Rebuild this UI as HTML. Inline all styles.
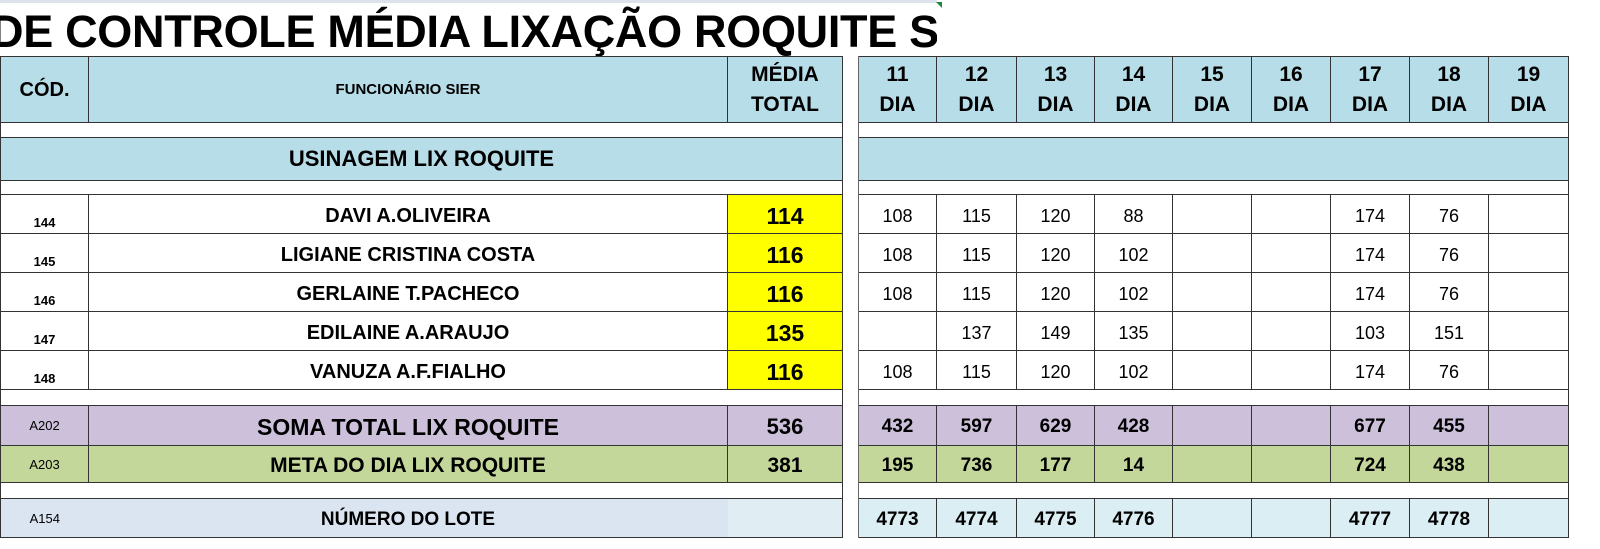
<!DOCTYPE html>
<html><head><meta charset="utf-8">
<style>
body{margin:0;width:1600px;height:549px;background:#fff;overflow:hidden;position:relative;font-family:"Liberation Sans",sans-serif}
.title{position:absolute;left:0;top:0;width:937px;height:56px;overflow:hidden;border-top:3px solid #dde3ea;box-sizing:border-box}
.title span{position:absolute;left:-9px;top:3px;font-weight:bold;font-size:45px;white-space:nowrap;letter-spacing:-0.3px;color:#000}
.tri{position:absolute;left:936px;top:2px;width:0;height:0;border-top:6px solid #1a8a3a;border-left:6px solid transparent}
table{position:absolute;left:0;top:56px;border-collapse:collapse;table-layout:fixed;width:1568px}
td{border:1px solid #333;padding:0;text-align:center;overflow:hidden;white-space:nowrap}
.h td{background:#b7dde8;font-weight:bold;font-size:21px;line-height:30px}
.b td{background:#fff}
.gap{background:#fff!important;border-top:none!important;border-bottom:none!important;border-left:1px solid #666;border-right:1px solid #666}
.nm{font-weight:bold;font-size:20px;padding-top:4px}
.cod{font-weight:bold;font-size:13px;vertical-align:bottom;padding-bottom:3px}
.y{background:#ffff00;font-weight:bold;font-size:23px;padding-top:4px}
.d td.n{font-size:18px;padding-top:4px}
.p td{background:#ccc0da}
.g td{background:#c4d79b}
.l td{background:#daeef3}
.sm{font-size:13px}
.bn{font-weight:bold;font-size:19px;padding-top:3px}
</style></head><body>
<div class="title"><span>DE CONTROLE MÉDIA LIXAÇÃO ROQUITE SIER</span></div>
<div class="tri"></div>
<table>
<colgroup><col style="width:88px"><col style="width:639px"><col style="width:115px"><col style="width:16px"><col style="width:78px"><col style="width:80px"><col style="width:78px"><col style="width:78px"><col style="width:79px"><col style="width:79px"><col style="width:79px"><col style="width:79px"><col style="width:80px"></colgroup>
<tr class="h" style="height:66px"><td style="font-size:20px;width:88px">CÓD.</td><td style="font-size:15px;width:639px">FUNCIONÁRIO SIER</td><td style="width:115px">MÉDIA<br>TOTAL</td><td class="gap" style="width:16px"></td><td style="width:78px">11<br>DIA</td><td style="width:80px">12<br>DIA</td><td style="width:78px">13<br>DIA</td><td style="width:78px">14<br>DIA</td><td style="width:79px">15<br>DIA</td><td style="width:79px">16<br>DIA</td><td style="width:79px">17<br>DIA</td><td style="width:79px">18<br>DIA</td><td style="width:80px">19<br>DIA</td></tr>
<tr class="b" style="height:15px"><td colspan="3"></td><td class="gap"></td><td colspan="9"></td></tr>
<tr style="height:43px"><td colspan="3" style="background:#b7dde8;font-weight:bold;font-size:22px">USINAGEM LIX ROQUITE</td><td class="gap"></td><td colspan="9" style="background:#b7dde8"></td></tr>
<tr class="b" style="height:14px"><td colspan="3"></td><td class="gap"></td><td colspan="9"></td></tr>
<tr class="d" style="height:39px"><td class="cod">144</td><td class="nm">DAVI A.OLIVEIRA</td><td class="y">114</td><td class="gap"></td><td class="n">108</td><td class="n">115</td><td class="n">120</td><td class="n">88</td><td></td><td></td><td class="n">174</td><td class="n">76</td><td></td></tr>
<tr class="d" style="height:39px"><td class="cod">145</td><td class="nm">LIGIANE CRISTINA COSTA</td><td class="y">116</td><td class="gap"></td><td class="n">108</td><td class="n">115</td><td class="n">120</td><td class="n">102</td><td></td><td></td><td class="n">174</td><td class="n">76</td><td></td></tr>
<tr class="d" style="height:39px"><td class="cod">146</td><td class="nm">GERLAINE T.PACHECO</td><td class="y">116</td><td class="gap"></td><td class="n">108</td><td class="n">115</td><td class="n">120</td><td class="n">102</td><td></td><td></td><td class="n">174</td><td class="n">76</td><td></td></tr>
<tr class="d" style="height:39px"><td class="cod">147</td><td class="nm">EDILAINE A.ARAUJO</td><td class="y">135</td><td class="gap"></td><td></td><td class="n">137</td><td class="n">149</td><td class="n">135</td><td></td><td></td><td class="n">103</td><td class="n">151</td><td></td></tr>
<tr class="d" style="height:39px"><td class="cod">148</td><td class="nm">VANUZA A.F.FIALHO</td><td class="y">116</td><td class="gap"></td><td class="n">108</td><td class="n">115</td><td class="n">120</td><td class="n">102</td><td></td><td></td><td class="n">174</td><td class="n">76</td><td></td></tr>
<tr class="b" style="height:16px"><td colspan="3"></td><td class="gap"></td><td colspan="9"></td></tr>
<tr class="p" style="height:40px"><td class="sm">A202</td><td class="nm" style="font-size:23px">SOMA TOTAL LIX ROQUITE</td><td class="bn" style="font-size:22px">536</td><td class="gap"></td><td class="bn">432</td><td class="bn">597</td><td class="bn">629</td><td class="bn">428</td><td></td><td></td><td class="bn">677</td><td class="bn">455</td><td></td></tr>
<tr class="g" style="height:37px"><td class="sm">A203</td><td class="nm" style="font-size:21px">META DO DIA LIX ROQUITE</td><td class="bn" style="font-size:21px">381</td><td class="gap"></td><td class="bn">195</td><td class="bn">736</td><td class="bn">177</td><td class="bn">14</td><td></td><td></td><td class="bn">724</td><td class="bn">438</td><td></td></tr>
<tr class="b" style="height:16px"><td colspan="3"></td><td class="gap"></td><td colspan="9"></td></tr>
<tr class="l" style="height:39px"><td class="sm" style="background:#dbe5f1;border-right:none">A154</td><td class="nm" style="background:#dbe5f1;border-left:none;border-right:none;font-size:19px">NÚMERO DO LOTE</td><td style="background:#e0eef4;border-left:none"></td><td class="gap"></td><td class="bn">4773</td><td class="bn">4774</td><td class="bn">4775</td><td class="bn">4776</td><td></td><td></td><td class="bn">4777</td><td class="bn">4778</td><td></td></tr>
</table>
</body></html>
